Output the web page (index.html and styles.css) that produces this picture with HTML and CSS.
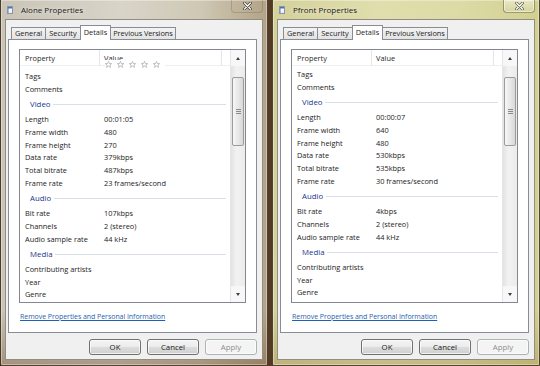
FILE: index.html
```html
<!DOCTYPE html>
<html lang="en">
<head>
  <meta charset="UTF-8" />
  <title>Properties</title>
  <link rel="stylesheet" href="styles.css">
</head>
<body>
  <div class="desktop">

    <div class="window win-left">
      <div class="titlebar">
        <span class="app-icon"></span>
        <span class="title">Alone Properties</span>
        <span class="close-btn">
          <svg width="9" height="8" viewBox="0 0 9 8"><path d="M1.5 1 L7.5 7 M7.5 1 L1.5 7" stroke="#3a3a3a" stroke-width="2.6" stroke-linecap="round"/><path d="M1.5 1 L7.5 7 M7.5 1 L1.5 7" stroke="#fff" stroke-width="1.3" stroke-linecap="round"/></svg>
        </span>
      </div>
      <div class="client">
        <div class="tabs">
          <span class="tab">General</span>
          <span class="tab">Security</span>
          <span class="tab active">Details</span>
          <span class="tab">Previous Versions</span>
        </div>
        <div class="panel">
          <div class="listview">
            <div class="lv-main">
              <div class="lv-header">
                <span class="hcell">Property</span>
                <span class="hcell">Value</span>
              </div>
              <div class="stars">
                <svg width="58" height="7" viewBox="0 0 58 7">
                  <g fill="#fff" stroke="#a8a8a8" stroke-width="0.7">
                    <polygon points="3.5,0.4 4.4,2.5 6.7,2.6 4.9,4 5.5,6.4 3.5,5.1 1.5,6.4 2.1,4 0.3,2.6 2.6,2.5"/>
                    <polygon transform="translate(12 0)" points="3.5,0.4 4.4,2.5 6.7,2.6 4.9,4 5.5,6.4 3.5,5.1 1.5,6.4 2.1,4 0.3,2.6 2.6,2.5"/>
                    <polygon transform="translate(24 0)" points="3.5,0.4 4.4,2.5 6.7,2.6 4.9,4 5.5,6.4 3.5,5.1 1.5,6.4 2.1,4 0.3,2.6 2.6,2.5"/>
                    <polygon transform="translate(36 0)" points="3.5,0.4 4.4,2.5 6.7,2.6 4.9,4 5.5,6.4 3.5,5.1 1.5,6.4 2.1,4 0.3,2.6 2.6,2.5"/>
                    <polygon transform="translate(48 0)" points="3.5,0.4 4.4,2.5 6.7,2.6 4.9,4 5.5,6.4 3.5,5.1 1.5,6.4 2.1,4 0.3,2.6 2.6,2.5"/>
                  </g>
                </svg>
              </div>
              <div class="lv-body">
                <div class="lv-cut"></div>
                <div class="row"><span>Tags</span><span></span></div>
                <div class="row"><span>Comments</span><span></span></div>
                <div class="group"><span>Video</span></div>
                <div class="row"><span>Length</span><span>00:01:05</span></div>
                <div class="row"><span>Frame width</span><span>480</span></div>
                <div class="row"><span>Frame height</span><span>270</span></div>
                <div class="row"><span>Data rate</span><span>379kbps</span></div>
                <div class="row"><span>Total bitrate</span><span>487kbps</span></div>
                <div class="row"><span>Frame rate</span><span>23 frames/second</span></div>
                <div class="group"><span>Audio</span></div>
                <div class="row"><span>Bit rate</span><span>107kbps</span></div>
                <div class="row"><span>Channels</span><span>2 (stereo)</span></div>
                <div class="row"><span>Audio sample rate</span><span>44 kHz</span></div>
                <div class="group"><span>Media</span></div>
                <div class="row"><span>Contributing artists</span><span></span></div>
                <div class="row"><span>Year</span><span></span></div>
                <div class="row"><span>Genre</span><span></span></div>
              </div>
            </div>
            <div class="scrollbar">
              <div class="sb-btn"><span class="arrow-up"></span></div>
              <div class="sb-track">
                <div class="sb-thumb"><span class="grip"></span></div>
              </div>
              <div class="sb-btn"><span class="arrow-down"></span></div>
            </div>
          </div>
          <a class="remove-link" href="#">Remove Properties and Personal Information</a>
        </div>
        <div class="buttons">
          <button class="btn">OK</button>
          <button class="btn">Cancel</button>
          <button class="btn" disabled>Apply</button>
        </div>
      </div>
    </div>

    <div class="window win-right">
      <div class="titlebar">
        <span class="app-icon"></span>
        <span class="title">Pfront Properties</span>
        <span class="close-btn framed">
          <svg width="9" height="8" viewBox="0 0 9 8"><path d="M1.5 1 L7.5 7 M7.5 1 L1.5 7" stroke="#5a5a4a" stroke-width="2.6" stroke-linecap="round"/><path d="M1.5 1 L7.5 7 M7.5 1 L1.5 7" stroke="#fff" stroke-width="1.3" stroke-linecap="round"/></svg>
        </span>
      </div>
      <div class="client">
        <div class="tabs">
          <span class="tab">General</span>
          <span class="tab">Security</span>
          <span class="tab active">Details</span>
          <span class="tab">Previous Versions</span>
        </div>
        <div class="panel">
          <div class="listview">
            <div class="lv-main">
              <div class="lv-header">
                <span class="hcell">Property</span>
                <span class="hcell">Value</span>
              </div>
              <div class="lv-body">
                <div class="lv-cut short"></div>
                <div class="row"><span>Tags</span><span></span></div>
                <div class="row"><span>Comments</span><span></span></div>
                <div class="group"><span>Video</span></div>
                <div class="row"><span>Length</span><span>00:00:07</span></div>
                <div class="row"><span>Frame width</span><span>640</span></div>
                <div class="row"><span>Frame height</span><span>480</span></div>
                <div class="row"><span>Data rate</span><span>530kbps</span></div>
                <div class="row"><span>Total bitrate</span><span>535kbps</span></div>
                <div class="row"><span>Frame rate</span><span>30 frames/second</span></div>
                <div class="group"><span>Audio</span></div>
                <div class="row"><span>Bit rate</span><span>4kbps</span></div>
                <div class="row"><span>Channels</span><span>2 (stereo)</span></div>
                <div class="row"><span>Audio sample rate</span><span>44 kHz</span></div>
                <div class="group"><span>Media</span></div>
                <div class="row"><span>Contributing artists</span><span></span></div>
                <div class="row"><span>Year</span><span></span></div>
                <div class="row"><span>Genre</span><span></span></div>
              </div>
            </div>
            <div class="scrollbar">
              <div class="sb-btn"><span class="arrow-up"></span></div>
              <div class="sb-track">
                <div class="sb-thumb"><span class="grip"></span></div>
              </div>
              <div class="sb-btn"><span class="arrow-down"></span></div>
            </div>
          </div>
          <a class="remove-link" href="#">Remove Properties and Personal Information</a>
        </div>
        <div class="buttons">
          <button class="btn">OK</button>
          <button class="btn">Cancel</button>
          <button class="btn" disabled>Apply</button>
        </div>
      </div>
    </div>

  </div>
</body>
</html>
```

FILE: styles.css
```css
* {
  box-sizing: border-box;
}

body {
  margin: 0;
  font-family: "Open Sans", "Noto Sans", sans-serif;
  font-size: 7.4px;
  color: #1c1c1c;
  background: #3b2819;
}

.desktop {
  display: flex;
  gap: 4px;
  height: 366px;
  overflow: hidden;
  background: linear-gradient(to right, #2e1e12, #6b4d33 40%, #3a2717 60%, #7a5a3e);
}

/* glass frame */
.window {
  width: 268px;
  height: 366px;
  display: flex;
  flex-direction: column;
  padding: 0 4px 5px;
  border: 1px solid rgba(50, 35, 20, 0.8);
  border-top: none;
  border-radius: 0 0 2px 2px;
  box-shadow: inset 0 0 0 1px rgba(255, 255, 255, 0.35);
}

.win-left {
  background:
    linear-gradient(to bottom, rgba(255,255,255,0) 85%, rgba(120,85,55,0.45)),
    linear-gradient(to right, #c9c4b6, #d8d4c8 45%, #cfc8b4 75%, #b3a386);
}

.win-right {
  background:
    linear-gradient(to bottom, rgba(255,255,255,0) 85%, rgba(150,120,60,0.35)),
    linear-gradient(to right, #d4d19c, #e0deac 40%, #dcdba6 70%, #d2d08f);
}

.titlebar {
  height: 19px;
  display: flex;
  align-items: center;
  position: relative;
  padding-left: 2px;
}

.app-icon {
  width: 6px;
  height: 8px;
  margin-top: 1px;
  background: linear-gradient(135deg, #ffffff 40%, #dfe6f2);
  border: 1px solid #8c95a8;
  box-shadow: inset 1px 2px 0 -0.5px #4b6fc4;
}

.title {
  margin-left: 8px;
  font-size: 8px;
  color: #1a1a1a;
  text-shadow: 0 0 4px rgba(255, 255, 255, 0.9);
}

.close-btn {
  position: absolute;
  top: 0;
  left: 226px;
  width: 32px;
  height: 13px;
  display: flex;
  align-items: center;
  justify-content: center;
  border: 1px solid rgba(90, 80, 60, 0.25);
  border-top: none;
  border-radius: 0 0 4px 4px;
}

.close-btn.framed {
  border-color: rgba(90, 90, 50, 0.55);
  background: linear-gradient(#e9e8c4, #d6d49e);
  box-shadow: inset 0 0 0 1px rgba(255, 255, 255, 0.5);
}

/* dialog face */
.client {
  flex: 1;
  display: flex;
  flex-direction: column;
  background: #f0f0f0;
  border: 1px solid #8f8d84;
  padding: 5px 5px 4px 1px;
}

.tabs {
  display: flex;
  height: 14px;
  padding-left: 4px;
  position: relative;
  z-index: 1;
}

.tab {
  height: 12px;
  margin-top: 2px;
  padding: 0 3px;
  line-height: 11px;
  border: 1px solid #898c95;
  border-bottom: none;
  border-right: none;
  background: linear-gradient(#f3f3f3, #e3e3e3);
  color: #1e1e1e;
}

.tab:nth-child(4) {
  border-right: 1px solid #898c95;
  padding: 0 2px;
  letter-spacing: -0.1px;
}

.tab.active {
  height: 15px;
  margin-top: 0;
  padding: 0 3px;
  line-height: 12px;
  background: #fff;
  border-right: 1px solid #898c95;
}

.tab.active + .tab {
  border-left: none;
}

.panel {
  height: 294px;
  margin-left: 1px;
  width: 249px;
  background: #fff;
  border: 1px solid #898c95;
  padding: 9px 10px 0;
}

.listview {
  height: 254px;
  display: flex;
  border: 1px solid #828790;
  background: #fff;
}

.lv-main {
  flex: 1;
  position: relative;
  overflow: hidden;
}

.lv-header {
  display: grid;
  grid-template-columns: 80px 1fr;
  height: 16px;
  border-bottom: 1px solid #f0f0f0;
}

.hcell {
  padding-left: 5px;
  line-height: 16px;
  color: #2a2a2a;
  border-right: 1px solid #e4e6ea;
}

.hcell + .hcell {
  padding-left: 4px;
  margin-right: 8px;
}

.stars {
  position: absolute;
  top: 10px;
  left: 85px;
  width: 60px;
  height: 8px;
  padding-top: 1px;
  background: #fff;
  line-height: 0;
}

.lv-body {
  height: 236px;
}

.lv-cut {
  height: 4px;
}

.lv-cut.short {
  height: 2px;
}

.row {
  display: grid;
  grid-template-columns: 84px 1fr;
  height: 12.75px;
  line-height: 12.75px;
  white-space: nowrap;
}

.row span:first-child {
  padding-left: 5px;
}

.group {
  height: 17.5px;
  display: flex;
  align-items: center;
  padding-left: 10px;
  padding-right: 4px;
  gap: 3px;
  color: #22368a;
  font-size: 7.8px;
}

.group::after {
  content: "";
  flex: 1;
  height: 1px;
  background: #d9dfe8;
}

/* vertical scrollbar */
.scrollbar {
  width: 15px;
  display: flex;
  flex-direction: column;
  background: linear-gradient(to right, #e3e3e3, #f2f2f2 40%, #ebebeb);
  border-left: 1px solid #e6e6e6;
}

.sb-btn {
  height: 16px;
  display: flex;
  align-items: center;
  justify-content: center;
  background: #f7f7f7;
}

.arrow-up {
  border-left: 2.5px solid transparent;
  border-right: 2.5px solid transparent;
  border-bottom: 3px solid #404040;
}

.arrow-down {
  border-left: 2.5px solid transparent;
  border-right: 2.5px solid transparent;
  border-top: 3px solid #404040;
}

.sb-track {
  flex: 1;
  padding: 11px 1px 0 1px;
}

.sb-thumb {
  height: 69px;
  border: 1px solid #9b9b9b;
  border-radius: 2px;
  background: linear-gradient(to right, #f6f6f6, #e8e8e8 50%, #d9d9d9);
  display: flex;
  align-items: center;
  justify-content: center;
}

.grip {
  width: 5px;
  height: 5px;
  background: repeating-linear-gradient(#8a8a8a 0 1px, transparent 1px 2px);
}

.remove-link {
  display: block;
  margin-top: 9px;
  margin-left: 1px;
  line-height: 10px;
  font-size: 7px;
  letter-spacing: -0.05px;
  color: #1f63b0;
  text-decoration: underline;
}

.buttons {
  display: flex;
  justify-content: flex-end;
  gap: 6px;
  margin-top: 6px;
}

.btn {
  width: 52px;
  height: 16px;
  padding: 0;
  font-family: inherit;
  font-size: 7.8px;
  color: #1a1a1a;
  border: 1px solid #707070;
  border-radius: 3px;
  background: linear-gradient(#f4f4f4, #ebebeb 50%, #dddddd 51%, #cfcfcf);
  box-shadow: inset 0 0 0 1px rgba(255, 255, 255, 0.7);
}

.btn:disabled {
  color: #8d8d8d;
  border-color: #adb2b5;
  background: #f4f4f4;
}
```
